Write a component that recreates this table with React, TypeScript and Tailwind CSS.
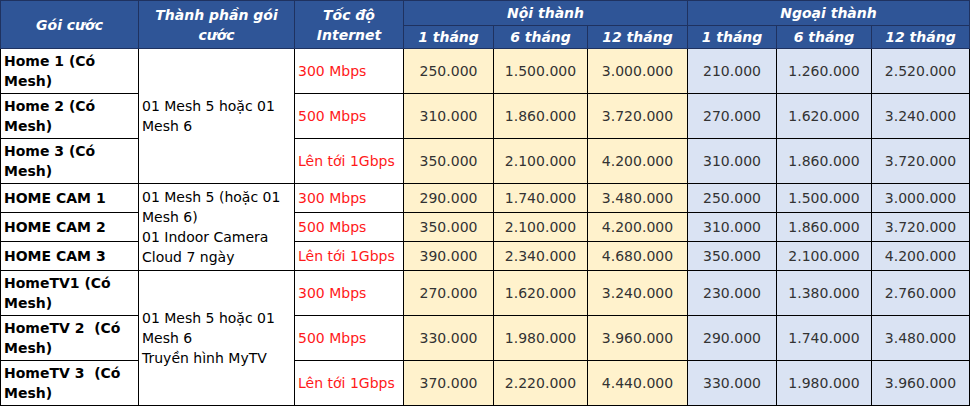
const inner = [
  ["250.000", "1.500.000", "3.000.000"],
  ["310.000", "1.860.000", "3.720.000"],
  ["350.000", "2.100.000", "4.200.000"],
  ["290.000", "1.740.000", "3.480.000"],
  ["350.000", "2.100.000", "4.200.000"],
  ["390.000", "2.340.000", "4.680.000"],
  ["270.000", "1.620.000", "3.240.000"],
  ["330.000", "1.980.000", "3.960.000"],
  ["370.000", "2.220.000", "4.440.000"],
];

const outer = [
  ["210.000", "1.260.000", "2.520.000"],
  ["270.000", "1.620.000", "3.240.000"],
  ["310.000", "1.860.000", "3.720.000"],
  ["250.000", "1.500.000", "3.000.000"],
  ["310.000", "1.860.000", "3.720.000"],
  ["350.000", "2.100.000", "4.200.000"],
  ["230.000", "1.380.000", "2.760.000"],
  ["290.000", "1.740.000", "3.480.000"],
  ["330.000", "1.980.000", "3.960.000"],
];

const names = [
  "Home 1 (Có Mesh)",
  "Home 2 (Có Mesh)",
  "Home 3 (Có Mesh)",
  "HOME CAM 1",
  "HOME CAM 2",
  "HOME CAM 3",
  "HomeTV1 (Có Mesh)",
  "HomeTV 2\u00a0 (Có Mesh)",
  "HomeTV 3\u00a0 (Có Mesh)",
];

const speeds = ["300 Mbps", "500 Mbps", "Lên tới 1Gbps"];

const groups: Record<number, string[]> = {
  0: ["01 Mesh 5 hoặc 01 Mesh 6"],
  3: ["01 Mesh 5 (hoặc 01 Mesh 6)", "01 Indoor Camera Cloud 7 ngày"],
  6: ["01 Mesh 5 hoặc 01 Mesh 6", "Truyền hình MyTV"],
};

const th =
  "border border-[#1f3260] bg-[#2f5597] text-white font-bold italic text-center align-middle px-1";
const td = "border border-black px-[3px] py-[2px] align-middle";

export default function App() {
  return (
    <div className="w-[971px] h-[407px] bg-white overflow-hidden">
      <table
        className="table-fixed border-collapse text-[14px] leading-[20px] text-black"
        style={{ fontFamily: '"DejaVu Sans", Verdana, sans-serif' }}
      >
        <colgroup>
          <col className="w-[138px]" />
          <col className="w-[156px]" />
          <col className="w-[109px]" />
          <col className="w-[90px]" />
          <col className="w-[94px]" />
          <col className="w-[100px]" />
          <col className="w-[89px]" />
          <col className="w-[95px]" />
          <col className="w-[98px]" />
        </colgroup>
        <thead>
          <tr className="h-[25px]">
            <th rowSpan={2} className={th}>Gói cước</th>
            <th rowSpan={2} className={th}>Thành phần gói cước</th>
            <th rowSpan={2} className={th}>Tốc độ Internet</th>
            <th colSpan={3} className={th}>Nội thành</th>
            <th colSpan={3} className={th}>Ngoại thành</th>
          </tr>
          <tr className="h-[23px]">
            {["1 tháng", "6 tháng", "12 tháng", "1 tháng", "6 tháng", "12 tháng"].map((m, i) => (
              <th key={i} className={th + " whitespace-nowrap"}>{m}</th>
            ))}
          </tr>
        </thead>
        <tbody>
          {names.map((name, r) => {
            const wide = r < 3 || r > 5;
            return (
              <tr key={r} className={wide ? "h-[45px]" : "h-[29px]"}>
                <td className={td + " font-bold"}>{name}</td>
                {groups[r] && (
                  <td rowSpan={3} className={td}>
                    {groups[r].map((l, i) => (
                      <div key={i}>{l}</div>
                    ))}
                  </td>
                )}
                <td className={td + " text-[#ff1a1a] whitespace-nowrap"}>{speeds[r % 3]}</td>
                {inner[r].map((v, i) => (
                  <td key={"n" + i} className={td + " bg-[#fff2cc] text-center text-[#333]"}>{v}</td>
                ))}
                {outer[r].map((v, i) => (
                  <td key={"o" + i} className={td + " bg-[#dae3f3] text-center text-[#333]"}>{v}</td>
                ))}
              </tr>
            );
          })}
        </tbody>
      </table>
    </div>
  );
}
